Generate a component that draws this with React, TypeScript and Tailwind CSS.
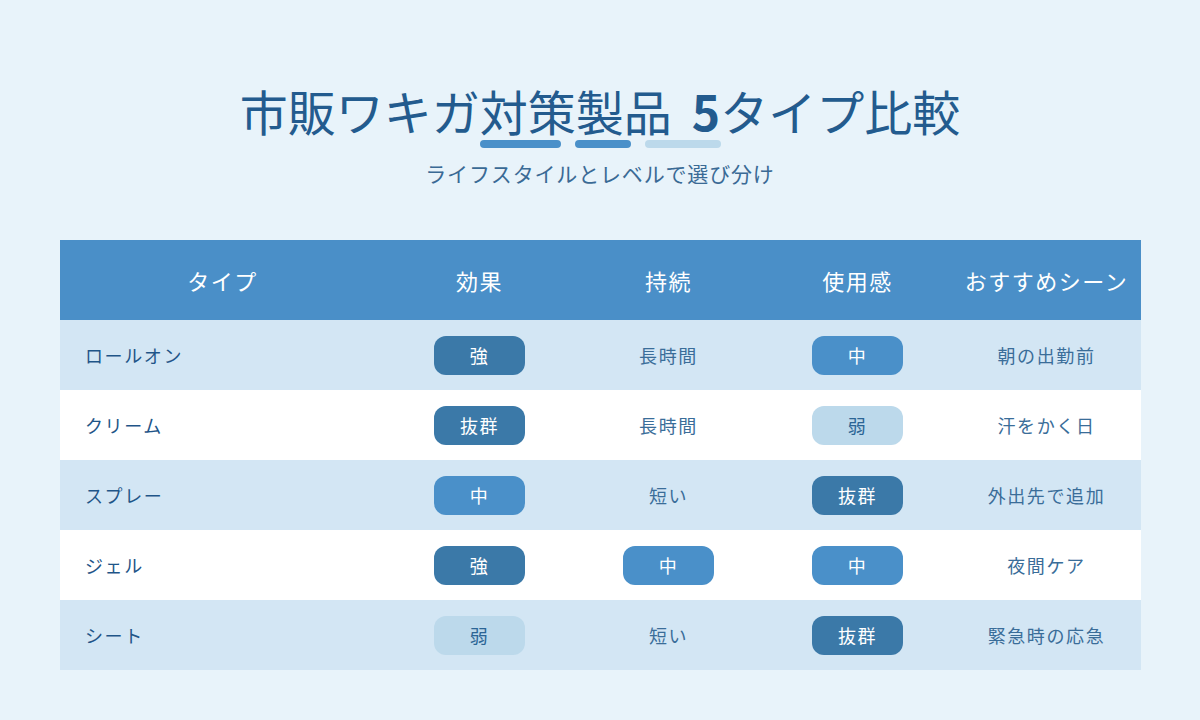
import React from "react";

type Level = "強" | "抜群" | "中" | "弱";

const rows: {
  type: string;
  effect: Level;
  duration: string | Level;
  feel: Level;
  scene: string;
}[] = [
  { type: "ロールオン", effect: "強", duration: "長時間", feel: "中", scene: "朝の出勤前" },
  { type: "クリーム", effect: "抜群", duration: "長時間", feel: "弱", scene: "汗をかく日" },
  { type: "スプレー", effect: "中", duration: "短い", feel: "抜群", scene: "外出先で追加" },
  { type: "ジェル", effect: "強", duration: "中", feel: "中", scene: "夜間ケア" },
  { type: "シート", effect: "弱", duration: "短い", feel: "抜群", scene: "緊急時の応急" },
];

const pillClass: Record<Level, string> = {
  強: "bg-[#3b79a8] text-white",
  抜群: "bg-[#3b79a8] text-white",
  中: "bg-[#4a90c9] text-white",
  弱: "bg-[#bcd9eb] text-[#2b6595]",
};

function Pill({ value }: { value: Level }) {
  return (
    <div
      className={`w-[91px] h-[39px] rounded-[12px] flex items-center justify-center text-[18px] tracking-[0.08em] ${pillClass[value]}`}
    >
      {value}
    </div>
  );
}

function isLevel(v: string): v is Level {
  return v === "強" || v === "抜群" || v === "中" || v === "弱";
}

function App() {
  return (
    <div
      className="w-[1200px] h-[720px] bg-[#e8f3fa] flex flex-col items-center overflow-hidden"
      style={{ fontFamily: '"Noto Sans CJK JP", "Noto Sans", sans-serif' }}
    >
      <h1 className="mt-[83px] h-[54px] leading-[54px] text-[48px] font-normal text-[#235b8e] whitespace-nowrap">
        市販ワキガ対策製品<span className="ml-[20px] font-bold">5</span>タイプ比較
      </h1>
      <div className="mt-[3px] flex gap-[14px] h-[8px]">
        <div className="w-[81px] h-[8px] rounded-full bg-[#4a90c9]" />
        <div className="w-[56px] h-[8px] rounded-full bg-[#4a90c9]" />
        <div className="w-[76px] h-[8px] rounded-full bg-[#bcd9eb]" />
      </div>
      <p className="mt-[10px] h-[30px] leading-[30px] text-[21px] tracking-[0.04em] text-[#3a6a95]">
        ライフスタイルとレベルで選び分け
      </p>

      <div className="mt-[52px] w-[1081px] self-start ml-[60px]">
        <div className="grid grid-cols-[325px_repeat(4,1fr)] h-[80px] bg-[#4a8fc8] text-white text-[22px] tracking-[0.07em]">
          {["タイプ", "効果", "持続", "使用感", "おすすめシーン"].map((h) => (
            <div key={h} className="flex items-center justify-center">
              {h}
            </div>
          ))}
        </div>
        {rows.map((r, i) => (
          <div
            key={r.type}
            className={`grid grid-cols-[325px_repeat(4,1fr)] h-[70px] text-[18px] tracking-[0.09em] ${
              i % 2 === 0 ? "bg-[#d3e6f4]" : "bg-white"
            }`}
          >
            <div className="flex items-center pl-[25px] text-[#1f5588]">{r.type}</div>
            <div className="flex items-center justify-center">
              <Pill value={r.effect} />
            </div>
            <div className="flex items-center justify-center text-[#3a6d99]">
              {isLevel(r.duration) ? <Pill value={r.duration} /> : r.duration}
            </div>
            <div className="flex items-center justify-center">
              <Pill value={r.feel} />
            </div>
            <div className="flex items-center justify-center text-[#3a6d99]">{r.scene}</div>
          </div>
        ))}
      </div>
    </div>
  );
}

export default App;
